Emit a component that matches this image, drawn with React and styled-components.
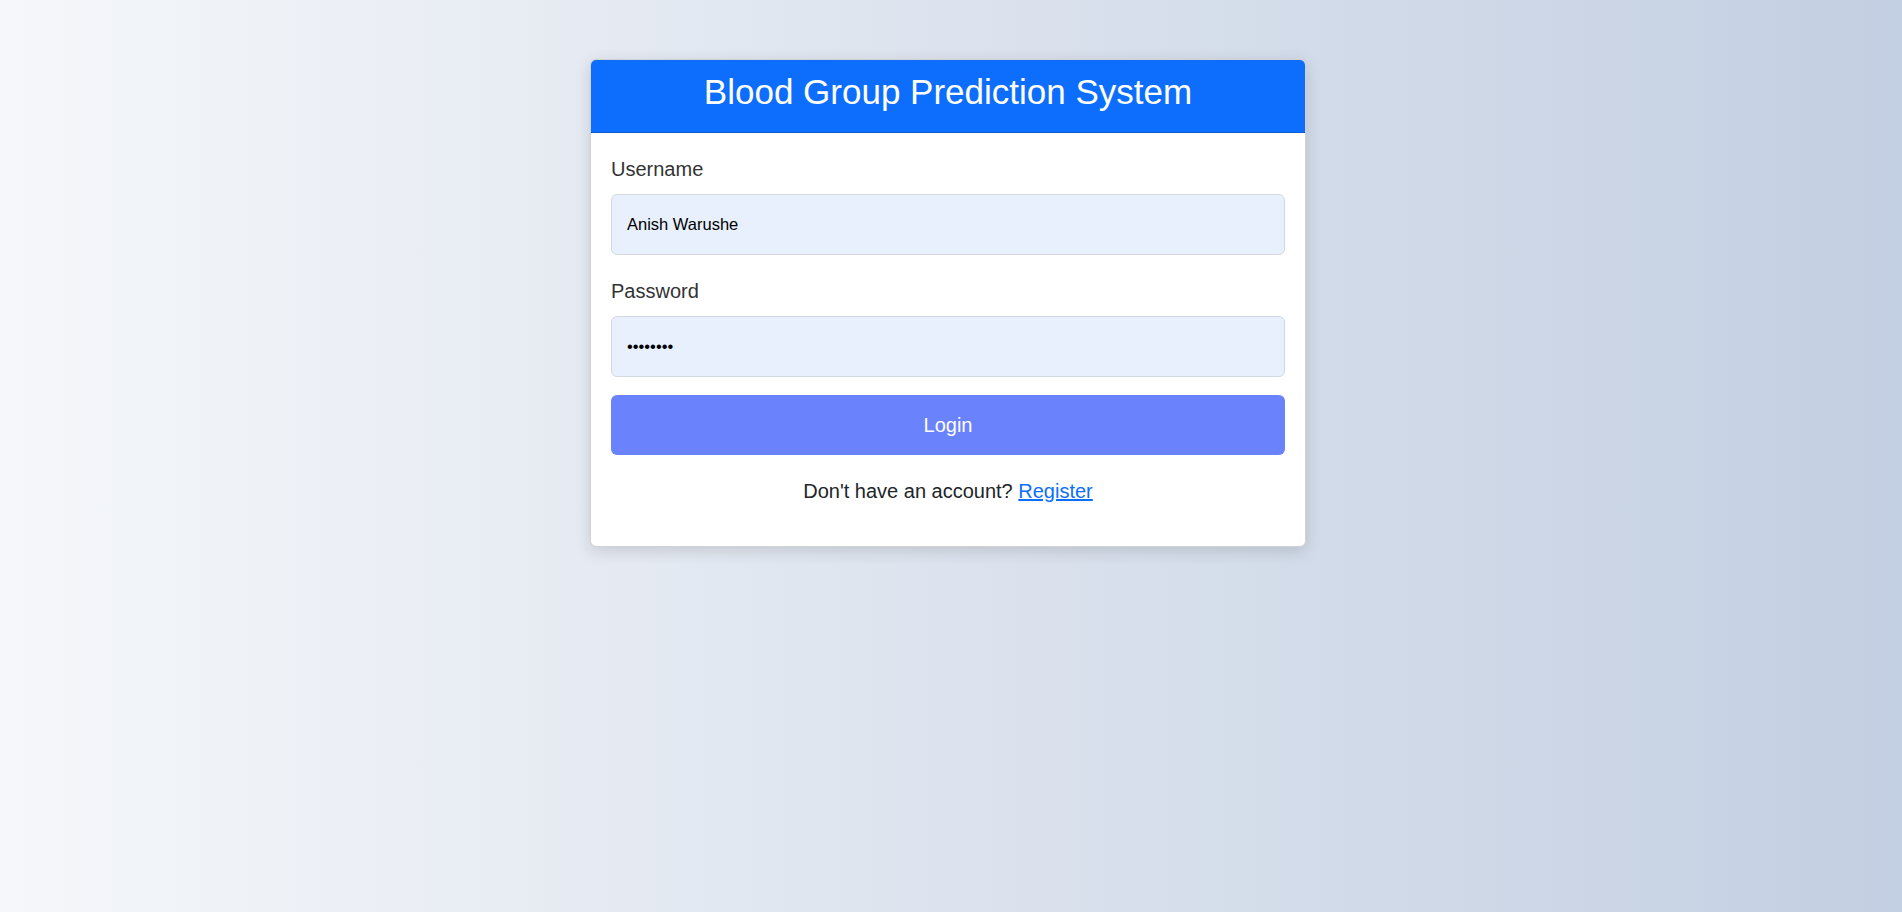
import React from 'react';
import styled, { createGlobalStyle } from 'styled-components';

const GlobalStyle = createGlobalStyle`
  * {
    box-sizing: border-box;
  }
  body {
    margin: 0;
    font-family: "Liberation Sans", Arial, sans-serif;
  }
`;

export default function App() {
  return (
    <>
      <GlobalStyle />
      <Page>
        <Card>
          <CardHeader>
            <Title>Blood Group Prediction System</Title>
          </CardHeader>
          <CardBody>
            <form onSubmit={(e) => e.preventDefault()}>
              <FormGroup $gap="21.5px">
                <Label htmlFor="username">Username</Label>
                <Input id="username" type="text" defaultValue="Anish Warushe" />
              </FormGroup>
              <FormGroup $gap="18px">
                <Label htmlFor="password">Password</Label>
                <Input id="password" type="password" defaultValue="12345678" />
              </FormGroup>
              <Button type="submit">Login</Button>
            </form>
            <Footer>
              Don't have an account? <Link href="#">Register</Link>
            </Footer>
          </CardBody>
        </Card>
      </Page>
    </>
  );
}

const Page = styled.div`
  min-height: 100vh;
  padding: 59px 6px 40px 0;
  background: linear-gradient(to right, #f5f7fa 0%, #c3cfe2 100%);
  display: flex;
  justify-content: center;
  align-items: flex-start;
`;

const Card = styled.div`
  width: 716px;
  background: #fff;
  border: 1px solid rgba(0, 0, 0, 0.175);
  border-radius: 6px;
  box-shadow: 0 4px 16px rgba(0, 0, 0, 0.14);
  overflow: hidden;
`;

const CardHeader = styled.div`
  height: 73px;
  padding: 11px 16px 0;
  background: #0d6efd;
  border-bottom: 1px solid rgba(0, 0, 0, 0.175);
  text-align: center;
`;

const Title = styled.h2`
  margin: 0;
  color: #fff;
  font-size: 35px;
  font-weight: 400;
  line-height: 1.2;
`;

const CardBody = styled.div`
  padding: 20.5px 20px 20px;
`;

const FormGroup = styled.div`
  margin-bottom: ${(p) => p.$gap};
`;

const Label = styled.label`
  display: block;
  margin-bottom: 10px;
  color: #333;
  font-size: 20px;
  line-height: 1.5;
`;

const Input = styled.input`
  display: block;
  width: 100%;
  height: 61px;
  padding: 0 15px;
  background: #e8f0fe;
  border: 1px solid #d3d8df;
  border-radius: 6px;
  color: #000;
  font-family: "Liberation Sans", Arial, sans-serif;
  font-size: 16.5px;
  outline: none;
`;

const Button = styled.button`
  display: block;
  width: 100%;
  height: 60px;
  background: #6a83fc;
  border: none;
  border-radius: 6px;
  color: #fff;
  font-family: "Liberation Sans", Arial, sans-serif;
  font-size: 20px;
  cursor: pointer;
`;

const Footer = styled.p`
  margin: 20.5px 0 20.5px;
  color: #212529;
  font-size: 20px;
  line-height: 1.5;
  text-align: center;
`;

const Link = styled.a`
  color: #0d6efd;
  text-decoration: underline;
`;
